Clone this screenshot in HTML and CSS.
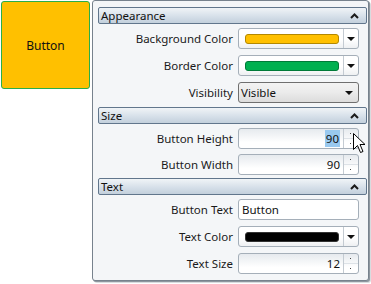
FILE: index.html
```html
<!DOCTYPE html>
<html lang="en">
<head>
  <meta charset="UTF-8">
  <title>Button Properties</title>
  <link rel="stylesheet" href="styles.css">
</head>
<body>
  <div class="preview">
    <div class="preview-button">Button</div>
  </div>

  <div class="property-grid">
    <div class="category">
      <span>Appearance</span>
      <svg class="chevron" width="9" height="6" viewBox="0 0 9 6"><polyline points="1,5 4.5,1.5 8,5" /></svg>
    </div>
    <div class="row">
      <label>Background Color</label>
      <div class="color-picker">
        <div class="swatch-area"><div class="swatch" style="background:#ffc000;border-color:#b38800"></div></div>
        <div class="drop"><span class="arrow"></span></div>
      </div>
    </div>
    <div class="row">
      <label>Border Color</label>
      <div class="color-picker">
        <div class="swatch-area"><div class="swatch" style="background:#00b050;border-color:#007a38"></div></div>
        <div class="drop"><span class="arrow"></span></div>
      </div>
    </div>
    <div class="row">
      <label>Visibility</label>
      <div class="combo">
        <span>Visible</span>
        <span class="arrow"></span>
      </div>
    </div>

    <div class="category">
      <span>Size</span>
      <svg class="chevron" width="9" height="6" viewBox="0 0 9 6"><polyline points="1,5 4.5,1.5 8,5" /></svg>
    </div>
    <div class="row short">
      <label>Button Height</label>
      <div class="spin">
        <div class="value"><span class="selected">90</span></div>
        <div class="spinner"><span></span><span></span></div>
      </div>
    </div>
    <div class="row short">
      <label>Button Width</label>
      <div class="spin">
        <div class="value">90</div>
        <div class="spinner"><span></span><span></span></div>
      </div>
    </div>

    <div class="category">
      <span>Text</span>
      <svg class="chevron" width="9" height="6" viewBox="0 0 9 6"><polyline points="1,5 4.5,1.5 8,5" /></svg>
    </div>
    <div class="row">
      <label>Button Text</label>
      <div class="textbox">Button</div>
    </div>
    <div class="row">
      <label>Text Color</label>
      <div class="color-picker">
        <div class="swatch-area"><div class="swatch" style="background:#000000;border-color:#333333"></div></div>
        <div class="drop"><span class="arrow"></span></div>
      </div>
    </div>
    <div class="row">
      <label>Text Size</label>
      <div class="spin">
        <div class="value">12</div>
        <div class="spinner"><span></span><span></span></div>
      </div>
    </div>
  </div>

  <svg class="cursor" width="13" height="21" viewBox="0 0 13 21">
    <path d="M0.5,0.5 L0.5,16.5 L4.5,12.5 L7.5,19.5 L10,18.5 L7,11.5 L12,11.5 Z" fill="#fff" stroke="#000" stroke-width="1" stroke-linejoin="miter"/>
  </svg>
</body>
</html>
```

FILE: styles.css
```css
* {
  margin: 0;
  padding: 0;
  box-sizing: border-box;
}

body {
  font-family: "Segoe UI", "Noto Sans", sans-serif;
  font-size: 11.5px;
  color: #1a1a1a;
  background: #ffffff;
  display: flex;
  align-items: flex-start;
  width: 371px;
  height: 284px;
  overflow: hidden;
}

.preview {
  padding: 1px 0 0 1px;
}

.preview-button {
  width: 89px;
  height: 88px;
  background-color: #ffc000;
  border: 1px solid #2aae4a;
  border-radius: 3px;
  display: flex;
  align-items: center;
  justify-content: center;
  padding-top: 1px;
  font-size: 12px;
  color: #111;
}

.property-grid {
  margin-left: 2px;
  width: 277px;
  height: 281px;
  background-color: #f4f6f8;
  border: 1px solid #77828d;
  border-radius: 3px;
  box-shadow: 1px 1px 0 #8e979f, 2px 2px 0 #d8dcdf;
  padding: 6px 0 0 5px;
}

.category {
  width: 269px;
  height: 17px;
  margin-top: 1px;
  margin-bottom: 1px;
  border: 1px solid #61768c;
  border-radius: 2px;
  background: linear-gradient(#f0f4f7, #d4dee8 60%, #c3d0dc);
  display: flex;
  align-items: center;
  justify-content: space-between;
  padding: 0 7px 0 2px;
  color: #111;
}

.category:first-child {
  margin-top: 0;
}

.chevron polyline {
  fill: none;
  stroke: #1a1a1a;
  stroke-width: 2;
}

.row {
  height: 27px;
  display: flex;
  align-items: flex-start;
  padding-top: 3px;
}

.row.short {
  height: 26px;
}

.row label {
  width: 139px;
  height: 21px;
  line-height: 21px;
  text-align: right;
  padding-right: 4px;
}

.color-picker,
.combo,
.spin,
.textbox {
  width: 121px;
  height: 21px;
  margin-left: 1px;
  border-radius: 3px;
}

.color-picker {
  display: flex;
  border: 1px solid #a5afb9;
  background: linear-gradient(#ffffff, #ffffff 55%, #eef0f2);
}

.swatch-area {
  flex: 1;
  display: flex;
  align-items: center;
  padding: 0 4px 0 6px;
}

.swatch {
  width: 100%;
  height: 10px;
  border: 1px solid;
  border-radius: 3px;
}

.drop {
  width: 15px;
  border-left: 1px solid #c4cbd2;
  display: flex;
  align-items: center;
  justify-content: center;
}

.arrow {
  width: 0;
  height: 0;
  border-left: 4px solid transparent;
  border-right: 4px solid transparent;
  border-top: 4px solid #111;
}

.combo {
  border: 1px solid #6f6f6f;
  background: linear-gradient(#f3f3f3, #ebebeb 50%, #dcdcdc);
  display: flex;
  align-items: center;
  justify-content: space-between;
  padding: 0 5px 0 2px;
  color: #111;
}

.spin {
  display: flex;
  border: 1px solid #a5afb9;
  background: linear-gradient(#e6eaee, #ffffff 70%);
}

.spin .value {
  flex: 1;
  text-align: right;
  line-height: 19px;
  padding-right: 3px;
  color: #111;
}

.selected {
  background-color: #99c9ef;
  padding: 1px 1px;
}

.spinner {
  width: 15px;
  border-left: 1px solid #c4cbd2;
  display: flex;
  flex-direction: column;
}

.spinner span {
  flex: 1;
  position: relative;
}

.spinner span:first-child {
  border-bottom: 1px solid #dde2e7;
}

.spinner span::after {
  content: "";
  position: absolute;
  left: 6px;
  top: 4px;
  width: 1px;
  height: 1px;
  background: #444;
}

.textbox {
  border: 1px solid #a5afb9;
  background: #ffffff;
  line-height: 19px;
  padding-left: 3px;
  color: #111;
}

.cursor {
  position: absolute;
  left: 353px;
  top: 133px;
}
```
